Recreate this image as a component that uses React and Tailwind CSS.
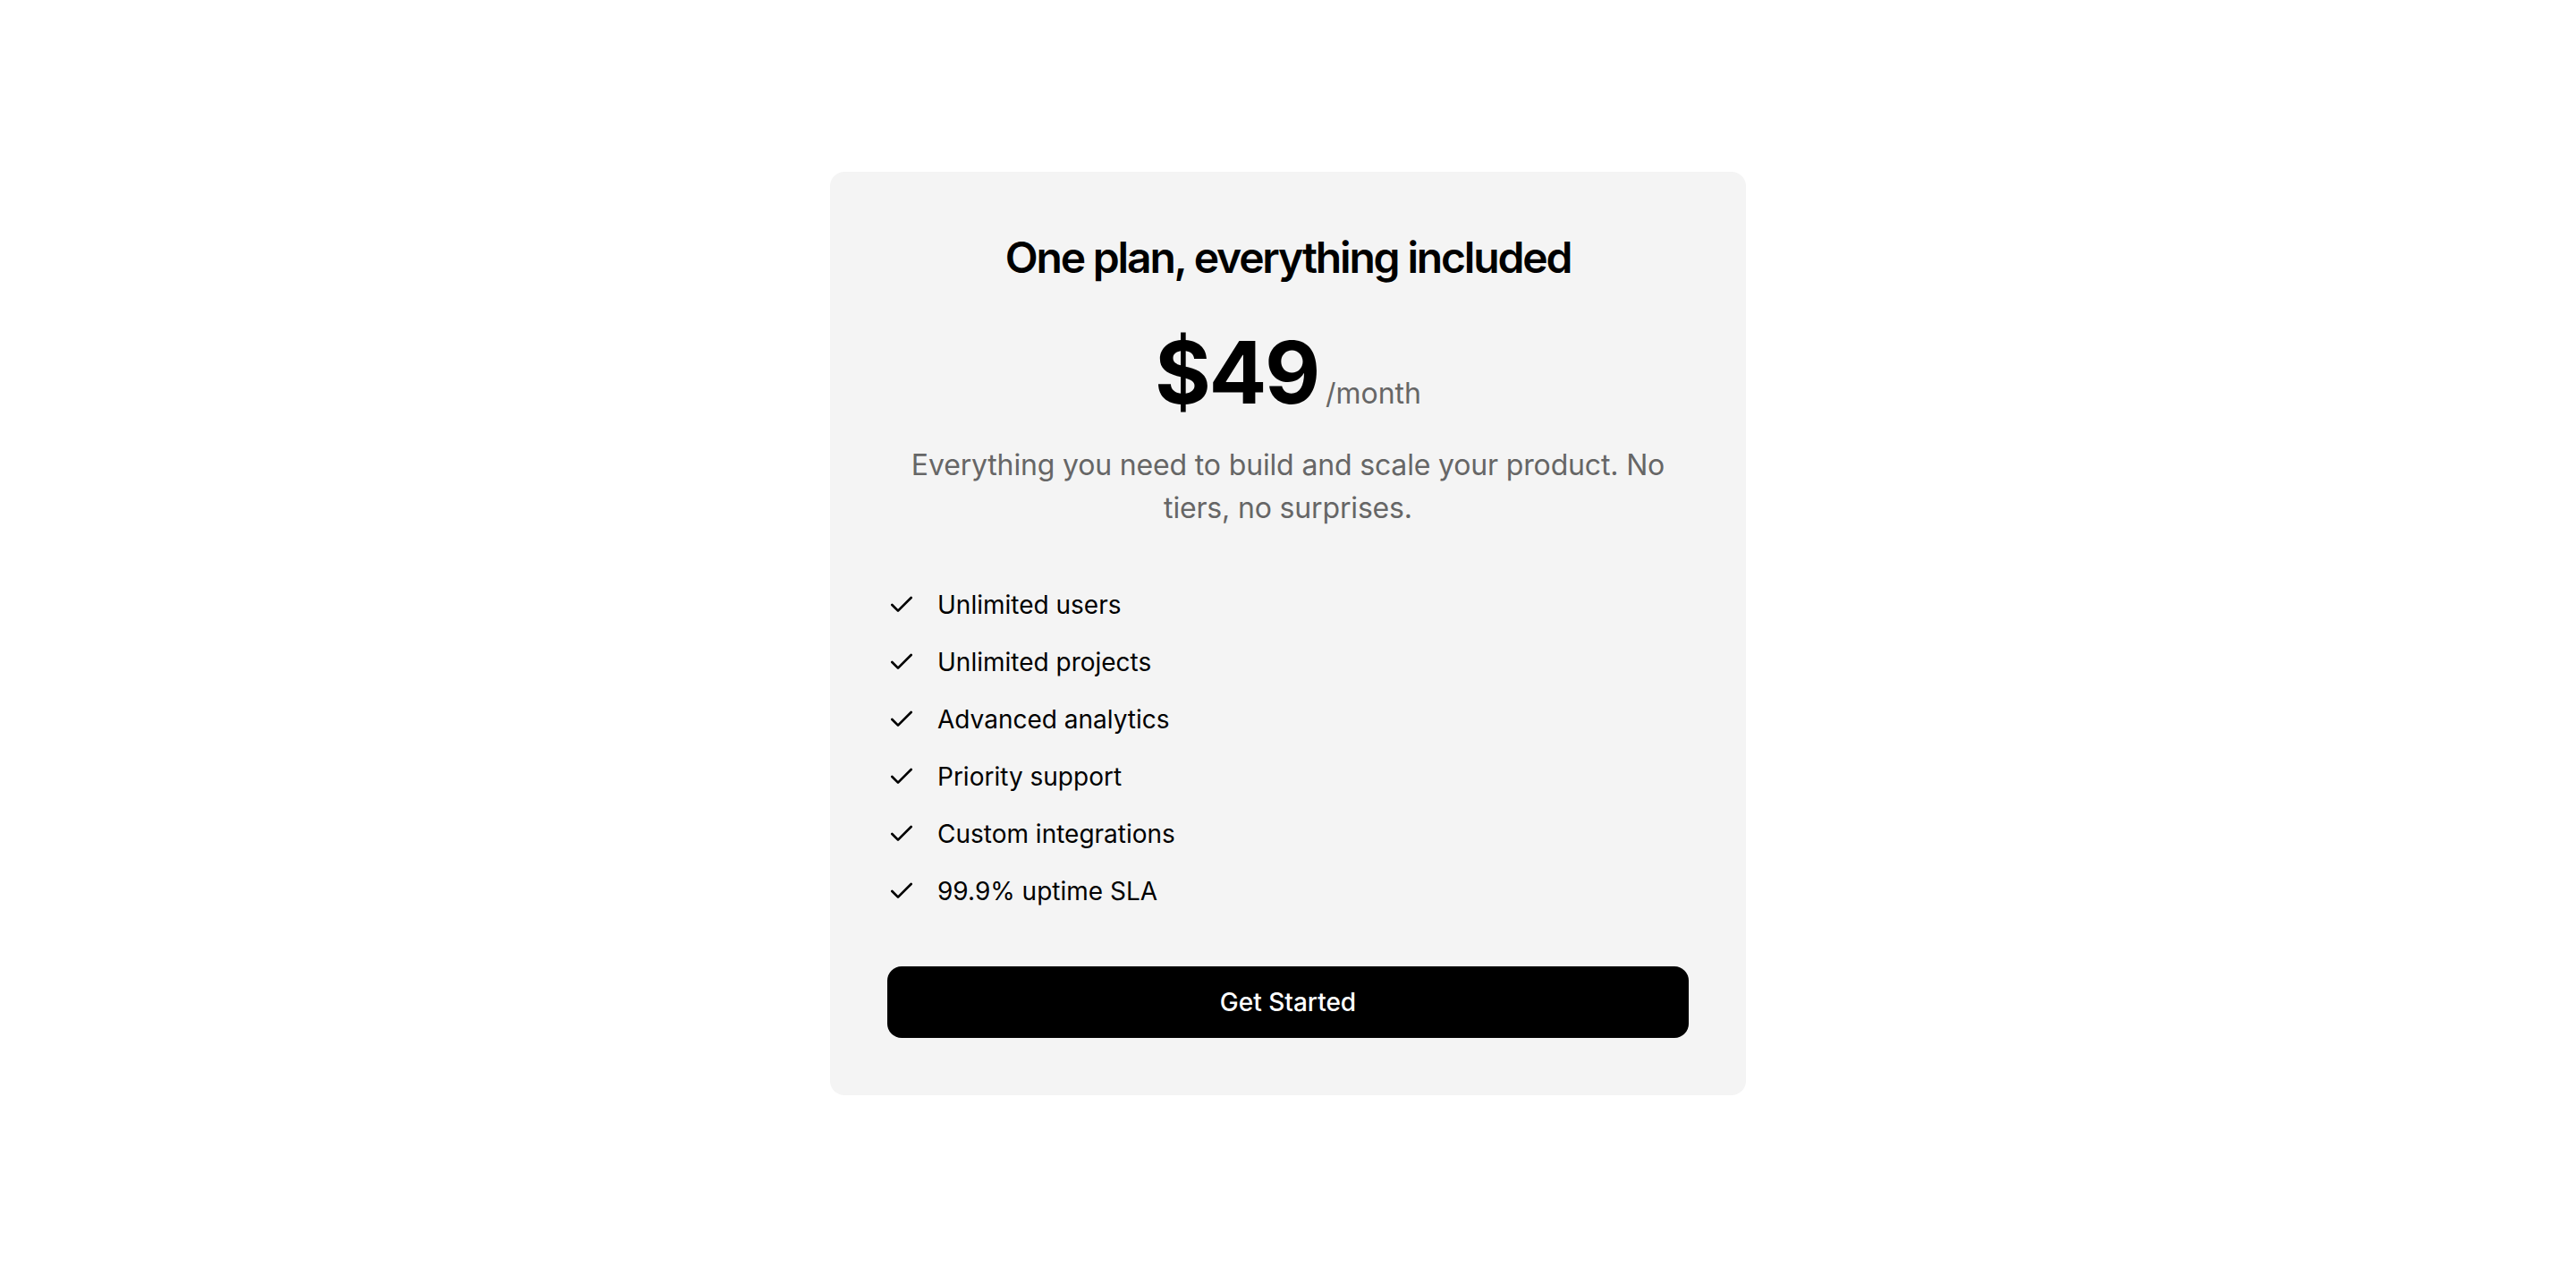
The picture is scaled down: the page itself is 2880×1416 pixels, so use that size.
import { Check } from "lucide-react";

const features = [
  "Unlimited users",
  "Unlimited projects",
  "Advanced analytics",
  "Priority support",
  "Custom integrations",
  "99.9% uptime SLA",
];

export default function App() {
  return (
    <div
      className="min-h-screen bg-white flex items-center justify-center"
      style={{ fontFamily: "Inter, 'Noto Sans', sans-serif" }}
    >
      <div className="w-[1024px] bg-[#f4f4f4] rounded-[16px] p-[64px]">
        {/* Heading */}
        <h1 className="text-center text-[48px] leading-[64px] font-semibold tracking-[-0.045em] text-black">
          One plan, everything included
        </h1>

        {/* Price */}
        <div className="mt-[48px] flex items-baseline justify-center gap-[8px]">
          <span className="text-[96px] leading-[96px] font-bold tracking-tight text-black">$49</span>
          <span className="text-[32px] leading-[48px] text-[#666666]">/month</span>
        </div>

        <p className="mt-[32px] text-center text-[32px] leading-[48px] tracking-[-0.005em] text-[#666666]">
          Everything you need to build and scale your product. No tiers, no surprises.
        </p>

        {/* Features */}
        <ul className="mt-[64px] flex flex-col gap-[24px]">
          {features.map((f) => (
            <li key={f} className="flex items-center gap-[24px] text-[28px] leading-[40px] text-black">
              <Check className="w-[32px] h-[32px] shrink-0" strokeWidth={2} />
              <span>{f}</span>
            </li>
          ))}
        </ul>

        <button className="mt-[64px] w-full h-[80px] rounded-[16px] bg-black text-white text-[28px] font-medium">
          Get Started
        </button>
      </div>
    </div>
  );
}
